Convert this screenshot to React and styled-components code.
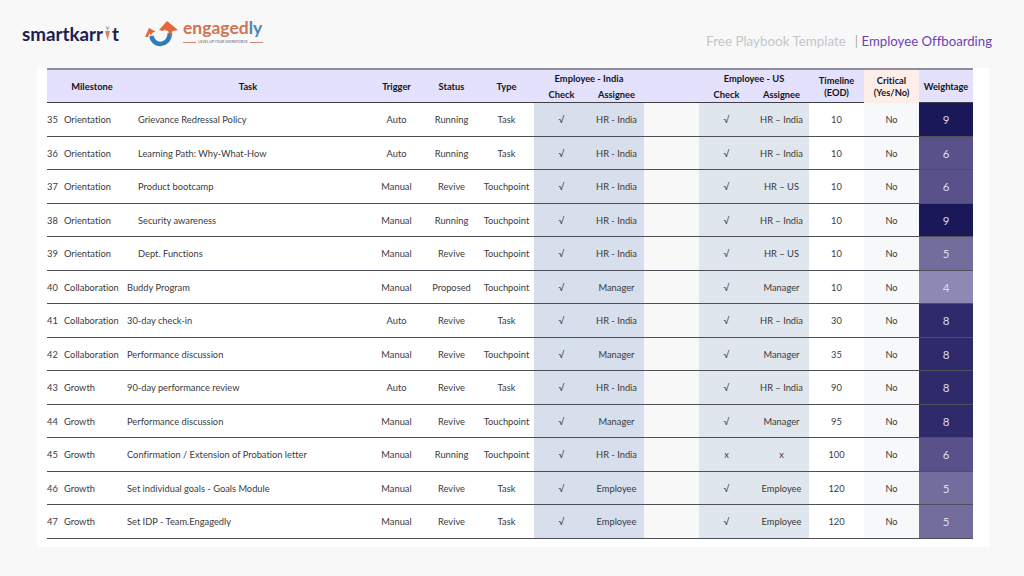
import styled, { createGlobalStyle } from "styled-components";

const GlobalStyle = createGlobalStyle`
	html, body {
		margin: 0;
		padding: 0;
		background: #f8f8f9;
	}
	body {
		font-family: "Lato", "Liberation Sans", sans-serif;
		font-variant-ligatures: none;
	}
`;

const COLUMNS = "80px 242px repeat(10, 55px) 54px";

const ROWS = [
	{ id: 35, milestone: "Orientation", task: "Grievance Redressal Policy", indent: true, trigger: "Auto", status: "Running", type: "Task", inCheck: "√", inWho: "HR - India", usCheck: "√", usWho: "HR – India", eod: 10, weight: 9 },
	{ id: 36, milestone: "Orientation", task: "Learning Path: Why-What-How", indent: true, trigger: "Auto", status: "Running", type: "Task", inCheck: "√", inWho: "HR - India", usCheck: "√", usWho: "HR – India", eod: 10, weight: 6 },
	{ id: 37, milestone: "Orientation", task: "Product bootcamp", indent: true, trigger: "Manual", status: "Revive", type: "Touchpoint", inCheck: "√", inWho: "HR - India", usCheck: "√", usWho: "HR – US", eod: 10, weight: 6 },
	{ id: 38, milestone: "Orientation", task: "Security awareness", indent: true, trigger: "Manual", status: "Running", type: "Touchpoint", inCheck: "√", inWho: "HR - India", usCheck: "√", usWho: "HR – India", eod: 10, weight: 9 },
	{ id: 39, milestone: "Orientation", task: "Dept. Functions", indent: true, trigger: "Manual", status: "Revive", type: "Touchpoint", inCheck: "√", inWho: "HR - India", usCheck: "√", usWho: "HR – US", eod: 10, weight: 5 },
	{ id: 40, milestone: "Collaboration", task: "Buddy Program", trigger: "Manual", status: "Proposed", type: "Touchpoint", inCheck: "√", inWho: "Manager", usCheck: "√", usWho: "Manager", eod: 10, weight: 4 },
	{ id: 41, milestone: "Collaboration", task: "30-day check-in", trigger: "Auto", status: "Revive", type: "Task", inCheck: "√", inWho: "HR - India", usCheck: "√", usWho: "HR – India", eod: 30, weight: 8 },
	{ id: 42, milestone: "Collaboration", task: "Performance discussion", trigger: "Manual", status: "Revive", type: "Touchpoint", inCheck: "√", inWho: "Manager", usCheck: "√", usWho: "Manager", eod: 35, weight: 8 },
	{ id: 43, milestone: "Growth", task: "90-day performance review", trigger: "Auto", status: "Revive", type: "Task", inCheck: "√", inWho: "HR - India", usCheck: "√", usWho: "HR – India", eod: 90, weight: 8 },
	{ id: 44, milestone: "Growth", task: "Performance discussion", trigger: "Manual", status: "Revive", type: "Touchpoint", inCheck: "√", inWho: "Manager", usCheck: "√", usWho: "Manager", eod: 95, weight: 8 },
	{ id: 45, milestone: "Growth", task: "Confirmation / Extension of Probation letter", trigger: "Manual", status: "Running", type: "Touchpoint", inCheck: "√", inWho: "HR - India", usCheck: "x", usWho: "x", eod: 100, weight: 6 },
	{ id: 46, milestone: "Growth", task: "Set individual goals - Goals Module", trigger: "Manual", status: "Revive", type: "Task", inCheck: "√", inWho: "Employee", usCheck: "√", usWho: "Employee", eod: 120, weight: 5 },
	{ id: 47, milestone: "Growth", task: "Set IDP - Team.Engagedly", trigger: "Manual", status: "Revive", type: "Task", inCheck: "√", inWho: "Employee", usCheck: "√", usWho: "Employee", eod: 120, weight: 5 },
];

const WEIGHT_COLORS = {
	4: "#8d89b5",
	5: "#736d9e",
	6: "#59528a",
	8: "#2e2a6c",
	9: "#1b1859",
};

function SmartKarrotLogo() {
	return (
		<SmartKarrot>
			smartkarr
			<svg width="9" height="16" viewBox="0 0 9 16">
				<path d="M2 6 L7 6 L4.6 15 Z" fill="#d9805f" />
				<path d="M4.5 6 L2.5 0.5 L5 2.5 L7 0.5 Z" fill="#8fb89a" />
			</svg>
			t
		</SmartKarrot>
	);
}

function EngagedlyLogo() {
	return (
		<Engagedly>
			<svg width="40" height="32" viewBox="0 0 40 32">
				<path d="M9.5 20 C11 31 27 31 28 17" fill="none" stroke="#2f7db5" strokeWidth="4.5" />
				<path d="M17 14 L25 5 L36 14 L31 15 L25 11 L21 15 Z" fill="#e4673a" />
				<path d="M25 10 L31 14 L28.5 20 L26 15 L22 14 Z" fill="#e4673a" />
				<path d="M3 21 L7 12 L13.5 15.5 L10 17 L9 20 L7.5 17 L6 21 Z" fill="#e4673a" />
			</svg>
			<EngagedlyWords>
				<EngagedlyName>
					engaged<span>ly</span>
				</EngagedlyName>
				<Tagline>LEVEL UP YOUR WORKFORCE</Tagline>
			</EngagedlyWords>
		</Engagedly>
	);
}

export default function App() {
	return (
		<>
			<GlobalStyle />
			<Page>
				<TopBar>
					<Logos>
						<SmartKarrotLogo />
						<EngagedlyLogo />
					</Logos>
					<Title>
						Free Playbook Template <TitleBar>&nbsp;|</TitleBar> <TitleAccent>Employee Offboarding</TitleAccent>
					</Title>
				</TopBar>
				<Panel>
					<Table>
						<HeaderRow>
							<HeaderCell $offset={10}>Milestone</HeaderCell>
							<HeaderCell>Task</HeaderCell>
							<HeaderCell>Trigger</HeaderCell>
							<HeaderCell>Status</HeaderCell>
							<HeaderCell>Type</HeaderCell>
							<HeaderGroup>
								<GroupTitle>Employee - India</GroupTitle>
								<GroupLabel>Check</GroupLabel>
								<GroupLabel>Assignee</GroupLabel>
							</HeaderGroup>
							<HeaderCell />
							<HeaderGroup>
								<GroupTitle>Employee - US</GroupTitle>
								<GroupLabel>Check</GroupLabel>
								<GroupLabel>Assignee</GroupLabel>
							</HeaderGroup>
							<HeaderCell $stacked>
								Timeline
								<br />
								(EOD)
							</HeaderCell>
							<HeaderCell $stacked $critical>
								Critical
								<br />
								(Yes/No)
							</HeaderCell>
							<HeaderCell>Weightage</HeaderCell>
						</HeaderRow>
						<Rows>
							{ROWS.map((row) => (
								<Row key={row.id}>
									<MilestoneCell>
										<RowNumber>{row.id}</RowNumber>
										{row.milestone}
									</MilestoneCell>
									<TaskCell $indent={row.indent}>{row.task}</TaskCell>
									<Cell>{row.trigger}</Cell>
									<Cell>{row.status}</Cell>
									<Cell>{row.type}</Cell>
									<Cell $bg="#d7deec">{row.inCheck}</Cell>
									<Cell $bg="#d7deec">{row.inWho}</Cell>
									<Cell $bg="#f8f8f9" />
									<Cell $bg="#dfe6ed">{row.usCheck}</Cell>
									<Cell $bg="#dfe6ed">{row.usWho}</Cell>
									<Cell>{row.eod}</Cell>
									<Cell $bg="#f7f8f9">No</Cell>
									<WeightCell $bg={WEIGHT_COLORS[row.weight]}>{row.weight}</WeightCell>
								</Row>
							))}
						</Rows>
					</Table>
				</Panel>
			</Page>
		</>
	);
}

const Page = styled.div`
	width: 1024px;
	height: 576px;
	overflow: hidden;
	display: flex;
	flex-direction: column;
`;

const TopBar = styled.div`
	height: 68px;
	flex-shrink: 0;
	display: flex;
	justify-content: space-between;
	padding: 0 32px 0 22px;
	box-sizing: border-box;
`;

const Logos = styled.div`
	display: flex;
	align-items: flex-start;
	gap: 21px;
	padding-top: 16px;
`;

const SmartKarrot = styled.div`
	display: flex;
	align-items: flex-end;
	height: 22px;
	margin-top: 7px;
	width: 99px;
	font-size: 18.8px;
	line-height: 22px;
	font-weight: 700;
	color: #1f1d50;
	white-space: nowrap;

	svg {
		margin-bottom: 4px;
	}
`;

const Engagedly = styled.div`
	display: flex;
	align-items: flex-start;
	gap: 1px;
`;

const EngagedlyWords = styled.div`
	display: flex;
	flex-direction: column;
	width: 80px;
	padding-top: 2px;
`;

const EngagedlyName = styled.div`
	font-size: 17.5px;
	line-height: 20px;
	font-weight: 700;
	color: #cf7352;
	white-space: nowrap;

	span {
		color: #4b86b0;
	}
`;

const Tagline = styled.div`
	display: flex;
	align-items: center;
	gap: 2px;
	margin-top: 2px;
	font-size: 3.5px;
	line-height: 5px;
	font-weight: 700;
	color: #8a8a94;
	white-space: nowrap;

	&::before,
	&::after {
		content: "";
		flex: 1;
		height: 1px;
		background: #c98a78;
	}
`;

const Title = styled.div`
	margin-top: 33px;
	font-size: 13.4px;
	line-height: 17px;
	color: #c6c6c8;
	white-space: nowrap;
`;

const TitleBar = styled.span`
	margin-left: 2px;
	color: #a9a9ad;
`;

const TitleAccent = styled.span`
	font-size: 13.2px;
	color: #6f3fb5;
`;

const Panel = styled.div`
	width: 952px;
	height: 479px;
	margin-left: 37px;
	padding-left: 10px;
	box-sizing: border-box;
	background: #fff;
`;

const Table = styled.div`
	width: 926px;
	display: flex;
	flex-direction: column;
`;

const HeaderRow = styled.div`
	display: grid;
	grid-template-columns: ${COLUMNS};
	height: 35px;
	box-sizing: border-box;
	background: #e3e1fb;
	border-top: 2px solid #8f8f9e;
	border-bottom: 1px solid #3f3f4a;
`;

const HeaderCell = styled.div`
	display: flex;
	align-items: center;
	justify-content: center;
	text-align: center;
	font-size: 9.3px;
	line-height: 12px;
	font-weight: 700;
	color: #14141c;
	padding-top: ${(props) => (props.$stacked ? 1 : 0)}px;
	padding-left: ${(props) => props.$offset || 0}px;
	background: ${(props) => (props.$critical ? "#fdeeea" : "transparent")};
`;

const HeaderGroup = styled.div`
	grid-column: span 2;
	display: grid;
	grid-template-columns: 1fr 1fr;
	grid-template-rows: 16px 16px;
	padding-top: 1px;
	font-size: 9.3px;
	font-weight: 700;
	color: #14141c;
`;

const GroupTitle = styled.div`
	grid-column: span 2;
	text-align: center;
	line-height: 16px;
`;

const GroupLabel = styled.div`
	text-align: center;
	line-height: 16px;
`;

const Rows = styled.div`
	display: flex;
	flex-direction: column;
	padding-top: 0.4px;
`;

const Row = styled.div`
	display: grid;
	grid-template-columns: ${COLUMNS};
	flex: 0 0 33.5px;
	box-sizing: border-box;
	border-bottom: 1px solid #4f4f5a;
	font-size: 9.3px;
	color: #3a3a40;
`;

const Cell = styled.div`
	display: flex;
	align-items: center;
	justify-content: center;
	background: ${(props) => props.$bg || "transparent"};
`;

const MilestoneCell = styled.div`
	display: flex;
	align-items: center;
	white-space: nowrap;
`;

const RowNumber = styled.span`
	width: 17px;
`;

const TaskCell = styled.div`
	display: flex;
	align-items: center;
	white-space: nowrap;
	padding-left: ${(props) => (props.$indent ? 11 : 0)}px;
`;

const WeightCell = styled(Cell)`
	font-size: 11.5px;
	color: #dcdcec;
`;
